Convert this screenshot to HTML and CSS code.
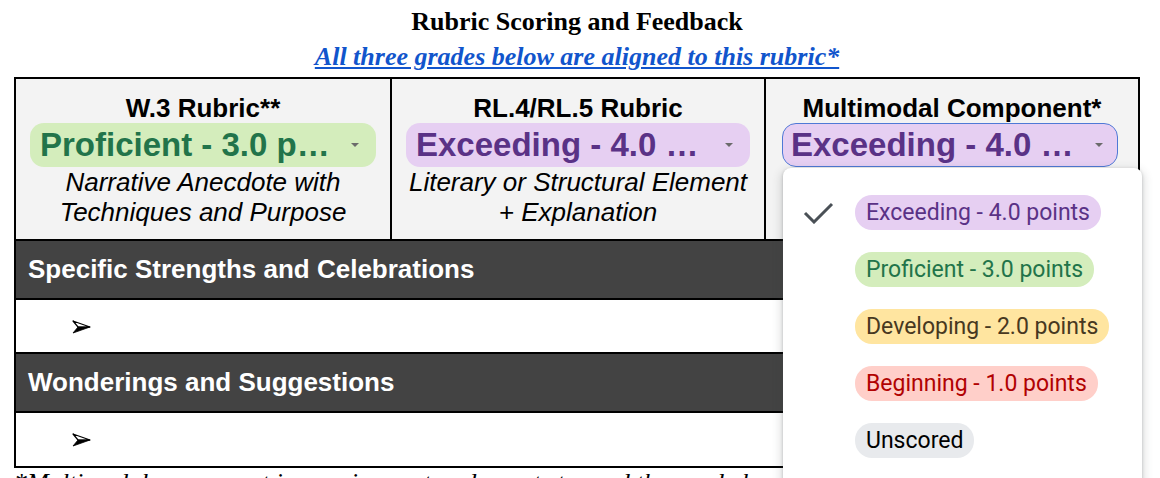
FILE: index.html
```html
<!DOCTYPE html>
<html lang="en">
<head>
<meta charset="utf-8">
<title>Rubric Scoring and Feedback</title>
<link rel="stylesheet" href="styles.css">
</head>
<body>
<div class="page">
  <h1 class="title">Rubric Scoring and Feedback</h1>
  <p class="subtitle"><a href="#">All three grades below are aligned to this rubric*</a></p>
  <div class="rubric">
    <div class="heads">
      <div class="head">
        <div class="head-title">W.3 Rubric**</div>
        <div class="chip chip-green"><span class="chip-text">Proficient - 3.0 p…</span><span class="caret"></span></div>
        <div class="head-desc">Narrative Anecdote with<br>Techniques and Purpose</div>
      </div>
      <div class="head">
        <div class="head-title">RL.4/RL.5 Rubric</div>
        <div class="chip chip-purple"><span class="chip-text">Exceeding - 4.0 …</span><span class="caret"></span></div>
        <div class="head-desc">Literary or Structural Element<br>+ Explanation</div>
      </div>
      <div class="head">
        <div class="head-title">Multimodal Component*</div>
        <div class="chip chip-purple chip-focus"><span class="chip-text">Exceeding - 4.0 …</span><span class="caret"></span></div>
        <div class="head-desc">Slideshow or Video<br>Presentation</div>
      </div>
    </div>
    <div class="bar">Specific Strengths and Celebrations</div>
    <div class="row">
      <svg class="bullet" viewBox="0 0 19 14" aria-hidden="true"><path d="M1 1 L18 7 L6 7 Z" fill="#fff" stroke="#000" stroke-width="1.2" stroke-linejoin="round"/><path d="M6 7 L18 7 L1 13 Z" fill="#000" stroke="#000" stroke-width="0.8" stroke-linejoin="round"/></svg>
    </div>
    <div class="bar">Wonderings and Suggestions</div>
    <div class="row row-last">
      <svg class="bullet" viewBox="0 0 19 14" aria-hidden="true"><path d="M1 1 L18 7 L6 7 Z" fill="#fff" stroke="#000" stroke-width="1.2" stroke-linejoin="round"/><path d="M6 7 L18 7 L1 13 Z" fill="#000" stroke="#000" stroke-width="0.8" stroke-linejoin="round"/></svg>
    </div>
  </div>
  <p class="footnote">*Multimodal component is a major part and counts toward the grade because it is</p>

  <div class="menu">
    <div class="menu-item">
      <svg class="check" viewBox="0 0 31 22" aria-hidden="true"><polyline points="2,11 11,20 29,2" fill="none" stroke="#4a5056" stroke-width="3"/></svg>
      <span class="pill pill-purple">Exceeding - 4.0 points</span>
    </div>
    <div class="menu-item">
      <span class="check"></span>
      <span class="pill pill-green">Proficient - 3.0 points</span>
    </div>
    <div class="menu-item">
      <span class="check"></span>
      <span class="pill pill-yellow">Developing - 2.0 points</span>
    </div>
    <div class="menu-item">
      <span class="check"></span>
      <span class="pill pill-red">Beginning - 1.0 points</span>
    </div>
    <div class="menu-item">
      <span class="check"></span>
      <span class="pill pill-grey">Unscored</span>
    </div>
  </div>
</div>
</body>
</html>
```

FILE: styles.css
```css
* { box-sizing: border-box; }

html, body {
  margin: 0;
  background: #fff;
  overflow: hidden;
}

.page {
  position: relative;
  width: 1126px;
  margin-left: 14px;
  padding-top: 7px;
}

.title {
  margin: 0;
  font: bold 26px/30px "Liberation Serif", "Times New Roman", serif;
  text-align: center;
  color: #000;
}

.subtitle {
  margin: 5px 0 0;
  font: italic bold 26px/30px "Liberation Serif", "Times New Roman", serif;
  text-align: center;
}

.subtitle a {
  color: #1155cc;
  text-decoration: underline;
}

.rubric {
  margin-top: 5px;
  border: 2px solid #000;
}

.heads {
  display: grid;
  grid-template-columns: repeat(3, 1fr);
  background: #f3f3f3;
  border-bottom: 2px solid #000;
}

.head {
  padding: 14px 0 12px;
  text-align: center;
  font-family: "Liberation Sans", Arial, sans-serif;
  color: #000;
}

.head + .head {
  border-left: 2px solid #000;
}

.head-title {
  font-weight: bold;
  font-size: 26px;
  line-height: 30px;
}

.chip {
  margin: 0 14px;
  height: 44px;
  border-radius: 14px;
  display: flex;
  align-items: center;
  justify-content: space-between;
  padding: 0 17px 0 10px;
}

.chip-text {
  font-weight: bold;
  font-size: 33px;
  line-height: 44px;
  white-space: nowrap;
}

.chip-green { background: #d4edbc; color: #22744a; }
.chip-purple { background: #e6cff2; color: #5a3286; }

.chip-focus {
  margin-left: 16px;
  margin-right: 20px;
  border: 1px solid #4f79d6;
  padding-left: 8px;
  padding-right: 14px;
}

.caret {
  width: 0;
  height: 0;
  border-left: 4px solid transparent;
  border-right: 4px solid transparent;
  border-top: 4px solid #6b6b6b;
}

.head-desc {
  font-style: italic;
  font-size: 26px;
  line-height: 30px;
}

.bar {
  background: #434343;
  color: #fff;
  font: bold 26px/30px "Liberation Sans", Arial, sans-serif;
  padding: 13px 12px 14px;
  border-bottom: 2px solid #000;
}

.row {
  height: 54px;
  display: flex;
  align-items: center;
  padding-left: 56px;
  border-bottom: 2px solid #000;
  background: #fff;
}

.row-last {
  border-bottom: 0;
  height: 53px;
}

.bullet {
  display: block;
  width: 19px;
  height: 14px;
  margin-top: 1px;
}

.footnote {
  margin: 0;
  padding-top: 2px;
  font: italic 26px/26px "Liberation Serif", "Times New Roman", serif;
  white-space: nowrap;
  color: #000;
}

.menu {
  position: absolute;
  left: 769px;
  top: 168px;
  width: 359px;
  height: 340px;
  background: #fff;
  border-radius: 8px;
  box-shadow: 0 1px 3px rgba(60, 64, 67, 0.3), 0 4px 8px 3px rgba(60, 64, 67, 0.15);
  padding-top: 16px;
}

.menu-item {
  height: 57px;
  display: flex;
  align-items: center;
  padding-left: 20px;
}

.check {
  display: block;
  width: 31px;
  height: 22px;
  margin-right: 21px;
  flex: none;
}

.pill {
  font: 23px/35px Roboto, "Liberation Sans", sans-serif;
  height: 35px;
  padding: 0 11px;
  border-radius: 17px;
  white-space: nowrap;
}

.pill-purple { background: #e6cff2; color: #5a3286; }
.pill-green { background: #d4edbc; color: #22744a; }
.pill-yellow { background: #ffe5a0; color: #473821; }
.pill-red { background: #ffcfc9; color: #b10202; }
.pill-grey { background: #e8eaed; color: #000; }
```
